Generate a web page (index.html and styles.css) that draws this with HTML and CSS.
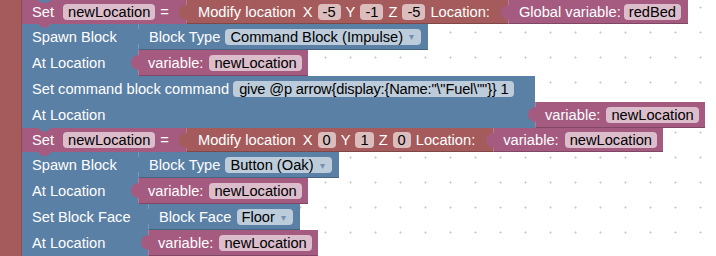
FILE: index.html
```html
<!DOCTYPE html>
<html lang="en">
<head>
    <meta charset="UTF-8">
    <title>Blocks</title>
    <link rel="stylesheet" href="styles.css">
</head>
<body>
    <div class="workspace">
        <div class="arm"></div>
        <div class="stack">

            <!-- Set newLocation = Modify location ... -->
            <div class="stmt set-row first mag">
                <div class="blk mag set-blk">
                    <span>Set</span>
                    <span class="pill pill-set">newLocation</span>
                    <span class="eq">=</span>
                </div>
                <div class="blk val red modify">
                    <span class="mod-label">Modify location</span>
                    <span>X</span><span class="pill">-5</span>
                    <span>Y</span><span class="pill">-1</span>
                    <span>Z</span><span class="pill">-5</span>
                    <span>Location:</span>
                </div>
                <div class="blk val mag global">
                    <span>Global variable:</span>
                    <span class="pill">redBed</span>
                </div>
            </div>

            <!-- Spawn Block -->
            <div class="stmt teal">
                <div class="line">
                    <div class="head w-spawn">Spawn Block</div>
                    <div class="blk val teal dd-blk">
                        <span>Block Type</span>
                        <span class="pill">Command Block (Impulse)<span class="arrow">▾</span></span>
                    </div>
                </div>
                <div class="line">
                    <div class="head w-spawn">At Location</div>
                    <div class="blk val mag var">
                        <span>variable:</span>
                        <span class="pill">newLocation</span>
                    </div>
                </div>
            </div>

            <!-- Set command block command -->
            <div class="stmt teal">
                <div class="line">
                    <div class="head w-cmd">
                        <span>Set command block command</span>
                        <span class="pill pill-cmd">give @p arrow{display:{Name:"\"Fuel\""}} 1</span>
                    </div>
                </div>
                <div class="line">
                    <div class="head w-cmd">At Location</div>
                    <div class="blk val mag var">
                        <span>variable:</span>
                        <span class="pill">newLocation</span>
                    </div>
                </div>
            </div>

            <!-- Set newLocation = Modify location X0 Y1 Z0 -->
            <div class="stmt set-row mag">
                <div class="blk mag set-blk">
                    <span>Set</span>
                    <span class="pill pill-set">newLocation</span>
                    <span class="eq">=</span>
                </div>
                <div class="blk val red modify">
                    <span class="mod-label">Modify location</span>
                    <span>X</span><span class="pill">0</span>
                    <span>Y</span><span class="pill">1</span>
                    <span>Z</span><span class="pill">0</span>
                    <span>Location:</span>
                </div>
                <div class="blk val mag var">
                    <span>variable:</span>
                    <span class="pill">newLocation</span>
                </div>
            </div>

            <!-- Spawn Block -->
            <div class="stmt teal">
                <div class="line">
                    <div class="head w-spawn">Spawn Block</div>
                    <div class="blk val teal dd-blk">
                        <span>Block Type</span>
                        <span class="pill">Button (Oak)<span class="arrow">▾</span></span>
                    </div>
                </div>
                <div class="line">
                    <div class="head w-spawn">At Location</div>
                    <div class="blk val mag var">
                        <span>variable:</span>
                        <span class="pill">newLocation</span>
                    </div>
                </div>
            </div>

            <!-- Set Block Face -->
            <div class="stmt teal">
                <div class="line">
                    <div class="head w-face">Set Block Face</div>
                    <div class="blk val teal dd-blk">
                        <span>Block Face</span>
                        <span class="pill">Floor<span class="arrow">▾</span></span>
                    </div>
                </div>
                <div class="line">
                    <div class="head w-face">At Location</div>
                    <div class="blk val mag var">
                        <span>variable:</span>
                        <span class="pill">newLocation</span>
                    </div>
                </div>
            </div>

        </div>
    </div>
</body>
</html>
```

FILE: styles.css
```css
body {
    margin: 0;
    font-family: "Liberation Sans", Arial, sans-serif;
    font-size: 14.67px;
    background-color: #fff;
    /* rejilla de puntos del área de trabajo */
    background-image: radial-gradient(circle, #cfcfcf 0.9px, transparent 1.3px);
    background-size: 25px 25px;
    background-position: -12px -5px;
}
.workspace {
    display: flex;
    height: 256px;
    overflow: hidden;
}
.arm {
    flex: none;
    width: 22px;
    background-color: #a55b5b;
    box-shadow: inset -1px 0 0 rgba(0, 0, 0, 0.15);
}
.stack {
    display: flex;
    flex-direction: column;
    align-items: flex-start;
}

/* colores de los bloques */
.teal { --c: #5b80a5; }
.mag  { --c: #a55b80; }
.red  { --c: #a55b5b; }

.stmt {
    position: relative;
    display: flex;
    flex-direction: column;
}
/* muesca de conexión inferior */
.stmt::after {
    content: "";
    position: absolute;
    left: 15px;
    top: 100%;
    width: 15px;
    height: 4px;
    background-color: var(--c);
    clip-path: polygon(0 0, 100% 0, 60% 100%, 40% 100%);
    z-index: 3;
}
.stmt.first::before {
    content: "";
    position: absolute;
    left: 15px;
    top: 0;
    width: 15px;
    height: 3px;
    background-color: #5b80a5;
    clip-path: polygon(0 0, 100% 0, 60% 100%, 40% 100%);
    z-index: 3;
}
.set-row {
    flex-direction: row;
    height: 25px;
}
.set-row.first {
    height: 24px;
}
.line {
    display: flex;
    height: 26px;
}
.head {
    display: flex;
    align-items: center;
    box-sizing: border-box;
    padding-left: 10px;
    background-color: var(--c);
    color: #fff;
    white-space: nowrap;
}
.w-spawn { width: 116px; }
.w-face  { width: 126px; }
.w-cmd   { width: 513px; }

.blk {
    position: relative;
    display: flex;
    align-items: center;
    box-sizing: border-box;
    background-color: var(--c);
    color: #fff;
    white-space: nowrap;
}
.val {
    box-shadow: inset 1px 0 0 rgba(255, 255, 255, 0.2), inset 0 -1px 0 rgba(0, 0, 0, 0.22);
}
/* pestaña de entrada de valor */
.val::before {
    content: "";
    position: absolute;
    left: -7px;
    top: 5px;
    width: 8px;
    height: 15px;
    background-color: var(--c);
    border-radius: 8px 0 0 8px / 7px 0 0 7px;
    z-index: 2;
}

.set-blk {
    width: 164px;
    padding-left: 10px;
}
.set-blk .pill-set { margin-left: 9px; }
.set-blk .eq { margin-left: 5px; }

.modify {
    gap: 5px;
    padding: 0 18px 0 12px;
}
.modify .mod-label { margin-right: 2px; }

.global {
    gap: 3px;
    padding: 0 7px 0 11px;
}
.var {
    gap: 6px;
    padding: 0 6px 0 10px;
}
.dd-blk {
    gap: 5px;
    padding: 0 7px 0 11px;
}

.pill {
    display: inline-flex;
    align-items: center;
    height: 16px;
    padding: 0 5px;
    border-radius: 4px;
    background-color: rgba(255, 255, 255, 0.6);
    color: #000;
}
.pill-cmd {
    margin-left: 4px;
    padding: 0 6px;
    letter-spacing: -0.18px;
}
.arrow {
    display: inline-block;
    width: 7px;
    margin-left: 6px;
    font-size: 10px;
    color: #7391af;
}
```
